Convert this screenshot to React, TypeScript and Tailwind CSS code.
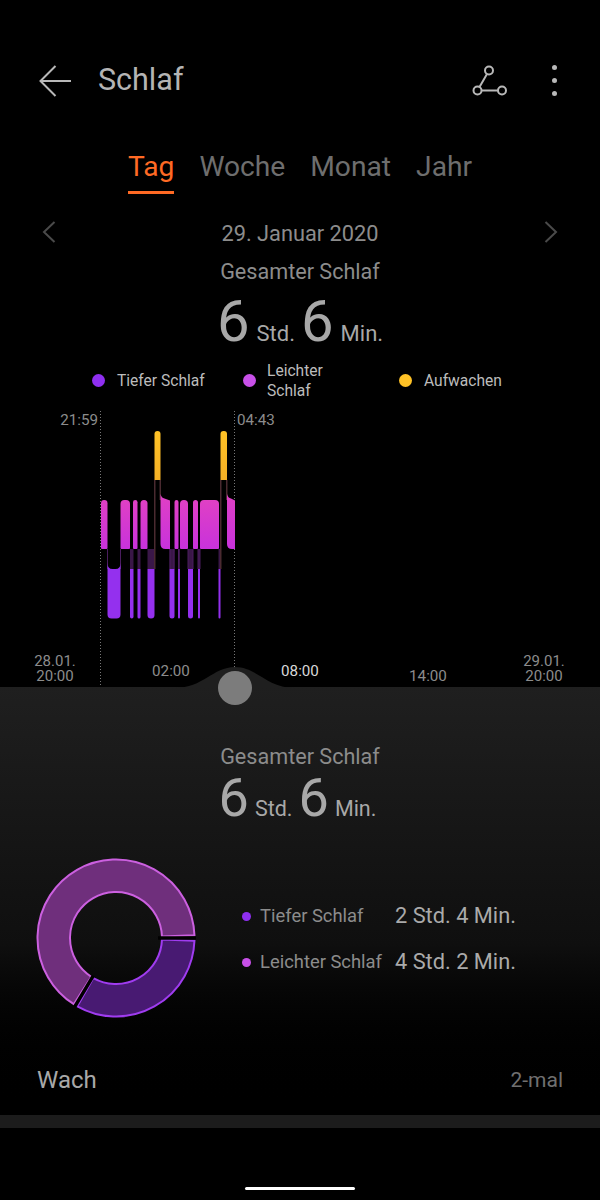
const FONT = "font-['Roboto','Liberation_Sans',sans-serif]";

// page x ranges of the sleep phases
const lightBars = [[101, 107.5], [120.5, 130], [133, 137.5], [140.5, 147.5], [160.5, 170], [174.5, 178.5], [180, 188], [193, 198], [200, 219], [227, 235]];
const deepBars = [[107.5, 120.5], [130, 133.5], [137.5, 140.5], [147.5, 154.5], [169.5, 174.5], [178, 180], [188, 193], [198, 200], [218.5, 220.5]];
const awakeBars = [[154.5, 160.5], [220.5, 227]];

function polar(r: number, deg: number) {
  const a = (deg * Math.PI) / 180;
  return `${(r * Math.cos(a)).toFixed(2)} ${(r * Math.sin(a)).toFixed(2)}`;
}

function ring(from: number, to: number, ro: number, ri: number) {
  const large = to - from > 180 ? 1 : 0;
  return `M${polar(ro, from)} A${ro} ${ro} 0 ${large} 1 ${polar(ro, to)} L${polar(ri, to)} A${ri} ${ri} 0 ${large} 0 ${polar(ri, from)} Z`;
}

// bar with separate top and bottom corner radii
function bar(a: number, b: number, top: number, bottom: number, rt: number, rb: number) {
  const w = b - a;
  const t = Math.min(rt, w / 2);
  const r = Math.min(rb, w / 2);
  return `M${a} ${top + t}Q${a} ${top} ${a + t} ${top}L${b - t} ${top}Q${b} ${top} ${b} ${top + t}L${b} ${bottom - r}Q${b} ${bottom} ${b - r} ${bottom}L${a + r} ${bottom}Q${a} ${bottom} ${a} ${bottom - r}Z`;
}

// bar entered from a taller phase: sloped shoulder on top
function shoulderBar(a: number, b: number) {
  return `M${a} 494Q${a + 1} 498 ${a + 4} 498.5L${b} 500.5L${b} 549L${a + 5} 549Q${a} 549 ${a} 544Z`;
}

// deep phase with a concave cup at its top
function cupBar(a: number, b: number) {
  return `M${a} 563Q${a} 569 ${a + 5} 569L${b - 5} 569Q${b} 569 ${b} 563L${b} 614.5Q${b} 618.5 ${b - 4} 618.5L${a + 4} 618.5Q${a} 618.5 ${a} 614.5Z`;
}

function SleepChart() {
  return (
    <svg width="600" height="282" viewBox="0 405 600 282" className="block">
      <defs>
        <linearGradient id="lightG" x1="0" y1="0" x2="0" y2="1">
          <stop offset="0%" stopColor="#e040c4" />
          <stop offset="100%" stopColor="#c832dc" />
        </linearGradient>
        <linearGradient id="awakeG" x1="0" y1="0" x2="0" y2="1">
          <stop offset="0%" stopColor="#ffc226" />
          <stop offset="100%" stopColor="#f5b026" />
        </linearGradient>
      </defs>
      <line x1="100.5" y1="411" x2="100.5" y2="687" stroke="#777" strokeWidth="1" strokeDasharray="1 2" />
      <line x1="234.5" y1="411" x2="234.5" y2="667" stroke="#777" strokeWidth="1" strokeDasharray="1 2" />
      {/* faint connectors between the phases */}
      {deepBars.filter(([a, b]) => b - a <= 7).map(([a, b]) => (
        <rect key={a} x={a} y="549" width={b - a} height="20" fill="#3a1748" />
      ))}
      {[107.5, 120.5, 170, 174, 178.5, 188, 193, 198, 200].map((x) => (
        <rect key={x} x={x - 0.5} y="549" width="1" height="20" fill="#4a1d5e" />
      ))}
      {[154.5, 160, 220.5, 226.5].map((x) => (
        <rect key={x} x={x - 0.5} y="480" width="1.5" height={x === 154.5 || x === 220.5 ? 89 : 20} fill="#4a2a30" />
      ))}
      {lightBars.map(([a, b]) =>
        a === 160.5 || a === 227 ? (
          <path key={a} d={shoulderBar(a, b)} fill="url(#lightG)" />
        ) : (
          <path key={a} d={bar(a, b, 500, 549, 4, 1)} fill="url(#lightG)" />
        ),
      )}
      {deepBars.map(([a, b]) =>
        b - a > 10 ? (
          <path key={a} d={cupBar(a, b)} fill="#9430ee" />
        ) : (
          <path key={a} d={bar(a, b, 569, 618.5, 0, 4)} fill="#9430ee" />
        ),
      )}
      {awakeBars.map(([a, b]) => (
        <path key={a} d={bar(a, b, 431, 480, 3, 0)} fill="url(#awakeG)" />
      ))}
    </svg>
  );
}

function Duration({ big, small, gap, unitGap, inset = "" }: { big: string; small: string; gap: string; unitGap: string; inset?: string }) {
  return (
    <div className={`flex items-baseline justify-center text-[#a8a8a8] ${inset}`}>
      <span className={big}>6</span>
      <span className={`${small} ${unitGap}`}>Std.</span>
      <span className={`${big} ${gap}`}>6</span>
      <span className={`${small} ${unitGap}`}>Min.</span>
    </div>
  );
}

export default function App() {
  return (
    <div className={`w-[600px] h-[1200px] bg-black overflow-hidden flex flex-col pt-[40px] ${FONT}`}>
      {/* toolbar */}
      <div className="h-[80px] pt-[1px] flex items-center pl-[39px] pr-[43px] shrink-0">
        <svg width="33" height="32" viewBox="0 0 33 32" fill="none" stroke="#b8b8b8" strokeWidth="2">
          <path d="M32 16H2M16.5 1 1.5 16l15 15" />
        </svg>
        <span className="ml-[26px] text-[30.5px] leading-none text-[#b4b4b4]">Schlaf</span>
        <svg className="ml-auto" width="36" height="32" viewBox="0 0 36 32" fill="none" stroke="#b8b8b8" strokeWidth="2">
          <circle cx="17" cy="5.5" r="4" />
          <circle cx="5.5" cy="25.5" r="4" />
          <circle cx="30" cy="25.5" r="4" />
          <path d="M15 9 7.5 22M9.5 25.5h16.5" />
        </svg>
        <div className="ml-[44px] flex flex-col gap-[8px]">
          <div className="w-[5px] h-[5px] rounded-full bg-[#b8b8b8]" />
          <div className="w-[5px] h-[5px] rounded-full bg-[#b8b8b8]" />
          <div className="w-[5px] h-[5px] rounded-full bg-[#b8b8b8]" />
        </div>
      </div>

      {/* period tabs */}
      <div className="h-[95px] pt-[26px] flex justify-center gap-[25px] text-[28.2px] leading-[42px] text-[#6e6e6e] shrink-0">
        <div className="h-[50px] text-[#ff6a24] relative">
          Tag
          <div className="absolute left-0 right-0 top-[45px] h-[3px] bg-[#ff6a24]" />
        </div>
        <div>Woche</div>
        <div>Monat</div>
        <div>Jahr</div>
      </div>

      {/* date row */}
      <div className="h-[38px] flex items-center justify-between px-[42px] shrink-0">
        <svg className="mb-[4px]" width="14" height="24" viewBox="0 0 14 24" fill="none" stroke="#4a4a4a" strokeWidth="2"><path d="M12.5 2 2 12l10.5 10" /></svg>
        <span className="text-[21.8px] leading-none text-[#8c8c8c]">29. Januar 2020</span>
        <svg className="mb-[4px]" width="14" height="24" viewBox="0 0 14 24" fill="none" stroke="#4a4a4a" strokeWidth="2"><path d="M1.5 2 12 12 1.5 22" /></svg>
      </div>

      <div className="h-[39px] flex items-center justify-center text-[21.6px] text-[#8c8c8c] shrink-0">Gesamter Schlaf</div>
      <div className="h-[62px] leading-[58px] shrink-0">
        <Duration big="text-[58px]" small="text-[22px]" gap="ml-[6px]" unitGap="ml-[7px]" />
      </div>

      {/* legend */}
      <div className="h-[47px] mt-[3px] mb-[1px] flex items-center text-[15.6px] leading-[20px] text-[#bcbcbc] shrink-0">
        <div className="ml-[92px] w-[151px] flex items-center">
          <div className="w-[13px] h-[13px] rounded-full bg-[#8f2ff0]" />
          <span className="ml-[12px]">Tiefer Schlaf</span>
        </div>
        <div className="w-[156px] flex items-center">
          <div className="w-[13px] h-[13px] rounded-full bg-[#c850e8]" />
          <span className="ml-[11px] w-[70px]">Leichter Schlaf</span>
        </div>
        <div className="flex items-center">
          <div className="w-[13px] h-[13px] rounded-full bg-[#ffc226]" />
          <span className="ml-[12px]">Aufwachen</span>
        </div>
      </div>

      {/* chart */}
      <div className="relative h-[282px] shrink-0">
        <SleepChart />
        <span className="absolute right-[502px] top-[5px] text-[15.2px] leading-[20px] text-[#8c8c8c]">21:59</span>
        <span className="absolute left-[237px] top-[5px] text-[15.2px] leading-[20px] text-[#8c8c8c]">04:43</span>
        <span className="absolute left-[15px] w-[80px] top-[249px] text-center text-[15px] leading-[14.5px] text-[#8c8c8c]">28.01.<br />20:00</span>
        <span className="absolute left-[131px] w-[80px] top-[256px] text-center text-[15.2px] leading-[20px] text-[#8c8c8c]">02:00</span>
        <span className="absolute left-[260px] w-[80px] top-[256px] text-center text-[15.2px] leading-[20px] text-[#d8d8d8]">08:00</span>
        <span className="absolute left-[388px] w-[80px] top-[261px] text-center text-[15.2px] leading-[20px] text-[#8c8c8c]">14:00</span>
        <span className="absolute left-[504px] w-[80px] top-[249px] text-center text-[15px] leading-[14.5px] text-[#8c8c8c]">29.01.<br />20:00</span>
      </div>

      {/* summary panel */}
      <div className="relative h-[428px] shrink-0 bg-gradient-to-b from-[#1f1f1f] via-[#0f0f0f] via-60% to-black">
        {/* slider handle */}
        <svg className="absolute left-[175px] top-[-20px]" width="120" height="21" viewBox="0 0 120 21">
          <path d="M0 21C28 21 38 0 60 0S92 21 120 21Z" fill="#1f1f1f" />
        </svg>
        <div className="absolute left-[218px] top-[-16px] w-[34px] h-[34px] rounded-full bg-[#7c7c7c]" />

        <div className="pt-[53px] text-center text-[21.6px] leading-[34px] text-[#8c8c8c]">Gesamter Schlaf</div>
        <div className="h-[54px] leading-[48px]">
          <Duration big="text-[54px]" small="text-[21.5px]" gap="ml-[6px]" unitGap="ml-[6px]" inset="pr-[5px]" />
        </div>

        <div className="mt-[30px] flex items-center pl-[36px]">
          <svg width="160" height="160" viewBox="-80 -80 160 160" className="shrink-0">
            <path d={ring(2, 119.5, 78.5, 46)} fill="#481a72" stroke="#a03cf0" strokeWidth="2" />
            <path d={ring(122.5, 358, 78.5, 46)} fill="#6f2f7c" stroke="#cc60e0" strokeWidth="2" />
            <path d={`M42 0H80M${polar(44, 121)}L${polar(80, 121)}`} stroke="#000" strokeWidth="3.5" fill="none" />
          </svg>
          <div className="ml-[46px] mt-[2px] flex flex-col gap-[20px]">
            <div className="flex items-center h-[26px]">
              <div className="w-[9px] h-[9px] rounded-full bg-[#8f2ff0]" />
              <span className="ml-[9px] w-[135px] text-[18.4px] text-[#8c8c8c]">Tiefer Schlaf</span>
              <span className="text-[21.8px] text-[#aaaaaa]">2 Std. 4 Min.</span>
            </div>
            <div className="flex items-center h-[26px]">
              <div className="w-[9px] h-[9px] rounded-full bg-[#c850e8]" />
              <span className="ml-[9px] w-[135px] text-[18.4px] whitespace-nowrap text-[#8c8c8c]">Leichter Schlaf</span>
              <span className="text-[21.8px] text-[#aaaaaa]">4 Std. 2 Min.</span>
            </div>
          </div>
        </div>

        <div className="mt-[47px] flex items-center justify-between pl-[37px] pr-[37px]">
          <span className="text-[24px] leading-[30px] text-[#a8a8a8]">Wach</span>
          <span className="text-[21px] leading-[30px] text-[#707070]">2-mal</span>
        </div>
      </div>

      <div className="h-[13px] bg-[#1c1c1c] shrink-0" />
      <div className="mt-[59px] mx-auto w-[110px] h-[3px] rounded-full bg-white shrink-0" />
    </div>
  );
}
